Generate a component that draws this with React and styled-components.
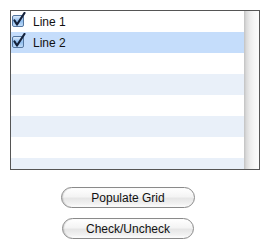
import React from 'react'
import styled, { createGlobalStyle } from 'styled-components';

const Global = createGlobalStyle`
    html, body {
        margin: 0;
        padding: 0;
        background: #ffffff;
        font-family: "Liberation Sans", Arial, sans-serif;
    }
`;

const Page = styled.div`
    padding: 10px 0 0 10px;
    width: 268px;
    height: 249px;
    box-sizing: border-box;
`;

const Grid = styled.div`
    width: 250px;
    height: 160px;
    box-sizing: border-box;
    border: 1px solid #555555;
    display: flex;
`;

const Rows = styled.div`
    flex: 1;
    display: flex;
    flex-direction: column;
    overflow: hidden;
`;

const Row = styled.div`
    height: 21px;
    flex: none;
    display: flex;
    align-items: center;
    padding-left: 1px;
    background: ${({ selected, alt }) => (selected ? '#c5ddfb' : alt ? '#e9f0f9' : '#ffffff')};
`;

const Label = styled.span`
    font-size: 12px;
    color: #111;
    margin-left: 7px;
`;

const ScrollTrack = styled.div`
    width: 15px;
    flex: none;
    background: linear-gradient(to right, #c2c2c2 0%, #dadada 15%, #ececec 40%, #f6f6f6 70%, #fbfbfb 100%);
`;

const Buttons = styled.div`
    margin: 17px 0 0 51px;
    width: 134px;
    display: flex;
    flex-direction: column;
    align-items: center;
    gap: 10px;
`;

const Button = styled.button`
    width: ${({ w }) => w}px;
    height: 21px;
    box-sizing: border-box;
    border: 1px solid #8a8a8a;
    border-radius: 11px;
    background: linear-gradient(to bottom, #ffffff 0%, #f4f4f4 45%, #e6e6e6 55%, #f2f2f2 85%, #ffffff 100%);
    font-family: "Liberation Sans", Arial, sans-serif;
    font-size: 12px;
    color: #111;
    padding: 0;
    box-shadow: inset 1px 0 1px rgba(0,0,0,0.15);
`;

const Check = () => (
    <svg width="14" height="16" viewBox="0 0 14 16" style={{ display: 'block', marginTop: '-3px' }}>
        <defs>
            <linearGradient id="cb" x1="0" y1="0" x2="0" y2="1">
                <stop offset="0" stopColor="#e2eefc" />
                <stop offset="0.5" stopColor="#8fbdee" />
                <stop offset="1" stopColor="#c4def9" />
            </linearGradient>
        </defs>
        <rect x="0.5" y="3.5" width="11" height="11" rx="1.5" fill="url(#cb)" stroke="#5577a0" />
        <path d="M2.5 8.5 L5 12.5 L12.5 1" fill="none" stroke="#14213a" strokeWidth="2.2" strokeLinecap="round" strokeLinejoin="round" />
    </svg>
);

const lines = ['Line 1', 'Line 2'];

const App = () => {
    const [checked, setChecked] = React.useState(true);
    const rows = [];
    for (let i = 0; i < 8; i++) {
        rows.push(
            <Row key={i} selected={i === 1} alt={i % 2 === 1}>
                {lines[i] && (
                    <>
                        {checked && <Check />}
                        <Label>{lines[i]}</Label>
                    </>
                )}
            </Row>
        );
    }
    return (
        <Page>
            <Global />
            <Grid>
                <Rows>{rows}</Rows>
                <ScrollTrack />
            </Grid>
            <Buttons>
                <Button w={134}>Populate Grid</Button>
                <Button w={132} onClick={() => setChecked(!checked)}>Check/Uncheck</Button>
            </Buttons>
        </Page>
    )
}

export default App
